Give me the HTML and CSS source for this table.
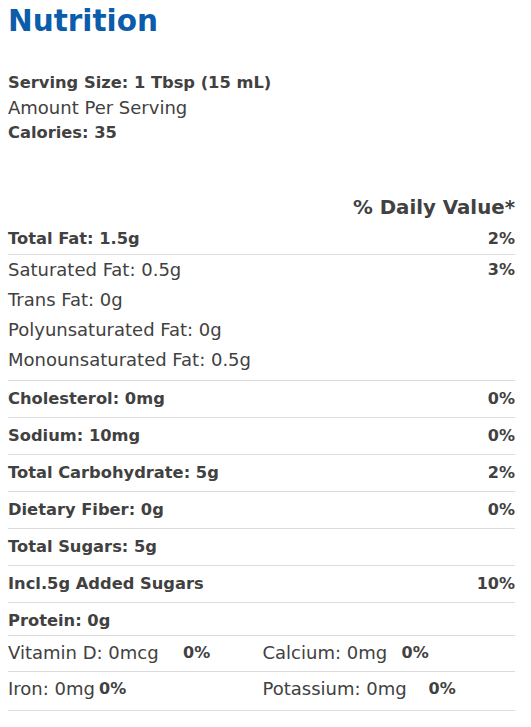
FILE: index.html
```html
<!DOCTYPE html>
<html lang="en">
<head>
<meta charset="utf-8">
<title>Nutrition</title>
<link rel="stylesheet" href="styles.css">
</head>
<body>
<div class="panel">
  <h1 class="title">Nutrition</h1>
  <div class="serving">
    <div class="b">Serving Size: 1 Tbsp (15 mL)</div>
    <div class="r">Amount Per Serving</div>
    <div class="b">Calories: 35</div>
  </div>
  <div class="dv-head">% Daily Value*</div>
  <div class="row row-first"><span class="b">Total Fat: 1.5g</span><span class="pct">2%</span></div>
  <div class="subgroup">
    <div class="sub"><span class="r">Saturated Fat: 0.5g</span><span class="pct">3%</span></div>
    <div class="sub"><span class="r">Trans Fat: 0g</span></div>
    <div class="sub"><span class="r">Polyunsaturated Fat: 0g</span></div>
    <div class="sub"><span class="r">Monounsaturated Fat: 0.5g</span></div>
  </div>
  <div class="row"><span class="b">Cholesterol: 0mg</span><span class="pct">0%</span></div>
  <div class="row"><span class="b">Sodium: 10mg</span><span class="pct">0%</span></div>
  <div class="row"><span class="b">Total Carbohydrate: 5g</span><span class="pct">2%</span></div>
  <div class="row"><span class="b">Dietary Fiber: 0g</span><span class="pct">0%</span></div>
  <div class="row"><span class="b">Total Sugars: 5g</span></div>
  <div class="row"><span class="b">Incl.5g Added Sugars</span><span class="pct">10%</span></div>
  <div class="row row-protein"><span class="b">Protein: 0g</span></div>
  <div class="mini mini-1">
    <div class="cell"><span class="r name w-vitd">Vitamin D: 0mcg</span><span class="pct">0%</span></div>
    <div class="cell cell-right"><span class="r name w-calc">Calcium: 0mg</span><span class="pct">0%</span></div>
  </div>
  <div class="mini mini-2">
    <div class="cell"><span class="r name w-iron">Iron: 0mg</span><span class="pct">0%</span></div>
    <div class="cell cell-right"><span class="r name w-pot">Potassium: 0mg</span><span class="pct">0%</span></div>
  </div>
</div>
</body>
</html>
```
FILE: styles.css
```css
html, body {
  margin: 0;
  padding: 0;
  background: #ffffff;
}
body {
  font-family: "DejaVu Sans", sans-serif;
  color: #414141;
}
.panel {
  width: 507px;
  padding: 0 8px;
}
.title {
  margin: 0;
  font-size: 29.5px;
  line-height: 42px;
  font-weight: bold;
  color: #0b5cab;
}
.serving {
  margin-top: 28px;
  line-height: 25px;
}
.b {
  font-weight: bold;
  font-size: 16.3px;
}
.r {
  font-weight: normal;
  font-size: 18px;
}
.dv-head {
  margin-top: 50px;
  text-align: right;
  font-weight: bold;
  font-size: 19.8px;
  line-height: 26px;
}
.row {
  display: flex;
  justify-content: space-between;
  align-items: center;
  line-height: 20px;
  padding: 8px 0;
  border-bottom: 1px solid #dcdcdc;
}
.row-first {
  padding: 8px 0 5px;
}
.row-protein {
  padding: 8px 0 4px;
}
.pct {
  font-weight: bold;
  font-size: 16px;
}
.subgroup {
  padding-bottom: 5px;
  border-bottom: 1px solid #dcdcdc;
}
.sub {
  display: flex;
  justify-content: space-between;
  align-items: center;
  height: 30px;
  line-height: 20px;
}
.mini {
  display: grid;
  grid-template-columns: 1fr 1fr;
  line-height: 20px;
  border-bottom: 1px solid #dcdcdc;
}
.mini-1 {
  padding: 7px 0 8px;
}
.mini-2 {
  padding: 7px 0 11px;
}
.cell {
  display: flex;
  align-items: center;
}
.cell-right {
  padding-left: 1px;
}
.name {
  display: inline-block;
}
.w-vitd { width: 175px; }
.w-iron { width: 91px; }
.w-calc { width: 139px; }
.w-pot { width: 166px; }
```
